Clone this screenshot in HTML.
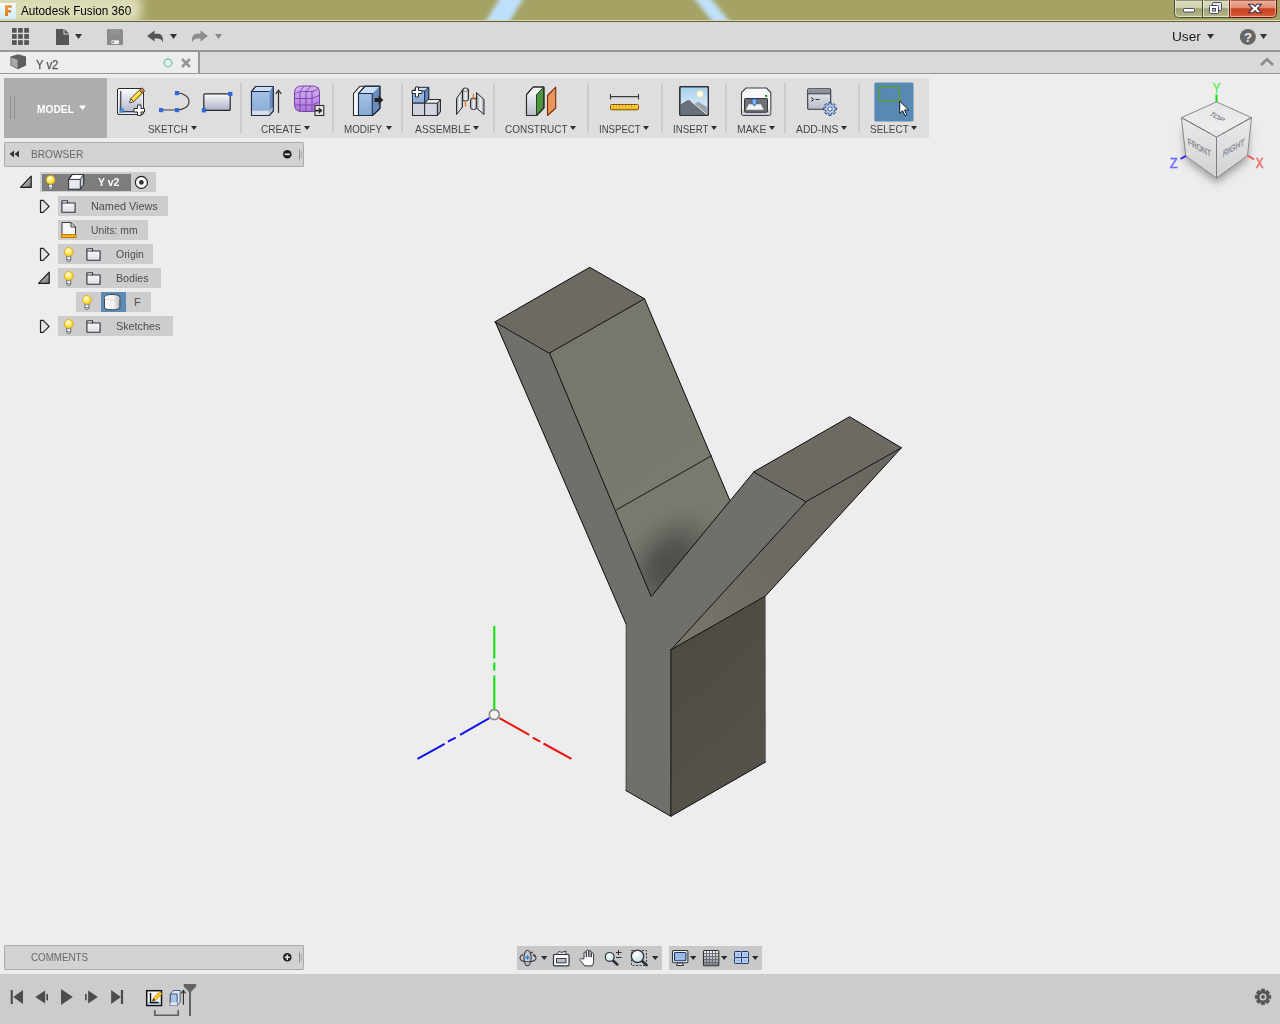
<!DOCTYPE html>
<html lang="en">
<head>
<meta charset="utf-8">
<title>Autodesk Fusion 360</title>
<style>
*{box-sizing:border-box;margin:0;padding:0}
html,body{width:1280px;height:1024px;overflow:hidden;background:#ededed;font-family:"Liberation Sans",sans-serif;font-size:11px;color:#555}
#app{position:absolute;left:0;top:0;width:1280px;height:1024px;overflow:hidden;background:#ededed}
#app div,#app span,#app svg{position:absolute}
#app svg{overflow:visible}
#titlebar{left:0;top:0;width:1280px;height:22px;background:#a5a364;overflow:hidden}
#titlebar .l1{left:0;top:20px;width:1280px;height:1px;background:#dddcb4}
#titlebar .l2{left:0;top:21px;width:1280px;height:1px;background:#5c5b3c}
#glow{left:-14px;top:-6px;width:156px;height:30px;border-radius:12px;background:rgba(255,255,236,.62);filter:blur(5px)}
#title{left:21px;top:4px;font-size:12px;color:#000;white-space:nowrap;line-height:14px;transform-origin:0 0;transform:scaleX(.977)}
#qat{left:0;top:22px;width:1280px;height:28px;background:#d9d9d9}
#sep1{left:0;top:50px;width:1280px;height:2px;background:#979797}
#tabs{left:0;top:52px;width:1280px;height:21px;background:#d9d9d9}
#tab{left:0;top:0;width:198px;height:21px;background:#ededed}
#tabsep{left:198px;top:0;width:2px;height:21px;background:#979797}
#sep2{left:0;top:73px;width:1280px;height:1px;background:#979797}
#tabname{left:36px;top:6px;font-size:12px;color:#555;-webkit-text-stroke:.25px #555;line-height:14px;white-space:nowrap;transform-origin:0 0;transform:scaleX(.94)}
#user{left:1172px;top:29px;font-size:13px;color:#1a1a1a;line-height:16px;transform-origin:0 0;transform:scaleX(1.05)}
#ribbon{left:4px;top:78px;width:925px;height:60px;background:#dedede}
#model{left:0;top:0;width:103px;height:60px;background:#adadad}
#model .t{left:32.5px;top:24px;font-size:11px;font-weight:bold;color:#fff;line-height:14px;transform-origin:0 0;transform:scaleX(.93)}
.rs{top:5px;width:2px;height:50px;background:#cbcbcb}
.rl{top:44px;font-size:11px;color:#454545;line-height:14px;white-space:nowrap;transform-origin:0 0;transform:scaleX(.88)}
.tri{width:0;height:0;border-left:3.5px solid transparent;border-right:3.5px solid transparent;border-top:4px solid #333}
#timeline{left:0;top:974px;width:1280px;height:50px;background:#cccccc}
.panel{left:4px;width:300px;height:25px;background:#d2d2d2;border:1px solid #aaa;border-radius:1px}
.panel .t{left:26px;top:4px;font-size:11px;color:#666;line-height:14px;transform-origin:0 0;transform:scaleX(.92)}
.navbox{top:946px;height:24px;background:#c8c8c8}
.row{height:20px;background:#cdcdcd}
.row .t{font-size:11px;color:#4d4d4d;line-height:14px;top:3px;white-space:nowrap}
</style>
</head>
<body>
<div id="app">
<div id="titlebar">
  <svg style="left:0;top:0" width="1280" height="22" viewBox="0 0 1280 22">
    <defs><filter id="bl" x="-20%" y="-50%" width="140%" height="200%"><feGaussianBlur stdDeviation="2.3"/></filter></defs>
    <g filter="url(#bl)" fill="#bfe0fa">
      <polygon points="501,-4 525,-4 507,26 483,26"/>
      <polygon points="692,-4 709,-4 733,26 716,26"/>
    </g>
  </svg>
  <div id="glow"></div>
  <div class="l1"></div><div class="l2"></div>
  <svg style="left:0;top:2px" width="17" height="17" viewBox="0 0 17 17">
    <defs><linearGradient id="ai" x1="0" y1="0" x2="0" y2="1"><stop offset="0" stop-color="#f4fbff"/><stop offset="1" stop-color="#cfeaf8"/></linearGradient>
    <linearGradient id="af" x1="0" y1="0" x2="1" y2="1"><stop offset="0" stop-color="#f6a33a"/><stop offset="1" stop-color="#d9601a"/></linearGradient></defs>
    <rect x="0" y="1" width="16" height="16" fill="url(#ai)"/>
    <path d="M5 3.2h6.6v2.6H8v2.2h3v2.4H8V14H5z" fill="url(#af)"/>
  </svg>
  <div id="title">Autodesk Fusion 360</div>
  <svg style="left:1174px;top:0" width="104" height="19" viewBox="0 0 104 19">
    <defs>
      <linearGradient id="wb" x1="0" y1="0" x2="0" y2="1"><stop offset="0" stop-color="#dedec4"/><stop offset=".45" stop-color="#d0d0ac"/><stop offset=".5" stop-color="#9e9e72"/><stop offset="1" stop-color="#bcbc90"/></linearGradient>
      <linearGradient id="wc" x1="0" y1="0" x2="0" y2="1"><stop offset="0" stop-color="#f0b4a0"/><stop offset=".45" stop-color="#e08c74"/><stop offset=".5" stop-color="#c9411f"/><stop offset=".8" stop-color="#d0502c"/><stop offset="1" stop-color="#dc7050"/></linearGradient>
    </defs>
    <path d="M.5 0V13.5Q.5 17.5 4.5 17.5H55.5V0z" fill="url(#wb)" stroke="#4d4d33" stroke-width="1"/>
    <path d="M55.5 0V17.5H98.5Q102.5 17.5 102.5 13.5V0z" fill="url(#wc)" stroke="#5a1a10" stroke-width="1"/>
    <path d="M1.5 0V13.5Q1.5 16.5 4.5 16.5H54.5V0" fill="none" stroke="#f0f0dc" stroke-opacity=".7" stroke-width="1"/>
    <path d="M56.5 0V16.5H98.5Q101.5 16.5 101.5 13.5V0" fill="none" stroke="#ffd8cc" stroke-opacity=".6" stroke-width="1"/>
    <line x1="28.5" y1="0" x2="28.5" y2="17" stroke="#4d4d33"/>
    <line x1="29.5" y1="0" x2="29.5" y2="17" stroke="#f0f0dc" stroke-opacity=".7"/>
    <rect x="9.5" y="8.5" width="11" height="3.5" rx="1" fill="#fff" stroke="#4a4a6a" stroke-width="1"/>
    <rect x="38.5" y="2.5" width="9" height="8" rx="1" fill="#e8e8e8" stroke="#4a4a6a"/>
    <rect x="35.5" y="5.500" width="9" height="8" rx="1" fill="#fff" stroke="#4a4a6a"/>
    <rect x="38.500" y="8.5" width="3" height="2.5" fill="#c8c8b0" stroke="#4a4a6a"/>
    <path d="M74.400 4.200L78.500 8.500 74.400 12.800h4.400L81 10.600 83.200 12.800h4.400L83.500 8.500 87.600 4.200H83.200L81 6.400 78.800 4.200z" fill="#fff" stroke="#45304a" stroke-width="1.100" stroke-linejoin="round"/>
  </svg>
</div>
<div id="qat">
  <svg style="left:0;top:0" width="1280" height="28" viewBox="0 22 1280 28">
    <g fill="#555">
      <rect x="12" y="28" width="4.700" height="4.700"/><rect x="18.100" y="28" width="4.700" height="4.700"/><rect x="24.200" y="28" width="4.700" height="4.700"/>
      <rect x="12" y="34.100" width="4.700" height="4.700"/><rect x="18.100" y="34.100" width="4.700" height="4.700"/><rect x="24.200" y="34.100" width="4.700" height="4.700"/>
      <rect x="12" y="40.200" width="4.700" height="4.700"/><rect x="18.100" y="40.200" width="4.700" height="4.700"/><rect x="24.200" y="40.200" width="4.700" height="4.700"/>
    </g>
    <path d="M56 29h7.500v5.500H69V45H56z" fill="#555"/>
    <path d="M64.500 29l4.500 4.500h-4.500z" fill="#555"/>
    <path d="M75 34h7l-3.500 5z" fill="#333"/>
    <path d="M107 29h14.500l1.500 1.500V45H107z" fill="#8b8b8b"/>
    <rect x="110" y="29" width="9.500" height="5" fill="#949494"/>
    <rect x="111.500" y="40.300" width="7.500" height="3.700" rx=".5" fill="#ececec"/>
    <rect x="112.300" y="41.200" width="1.600" height="2" fill="#8b8b8b"/>
    <path d="M147 36l7.500-5.500v3.300h3c4 0 5.500 2.500 5.500 7.200v1.500c-1.300-3-2.800-4-5.500-4h-3v3z" fill="#555"/>
    <path d="M170 34h7l-3.500 5z" fill="#333"/>
    <path d="M208 36l-7.500-5.500v3.300h-3c-4 0-5.500 2.500-5.500 7.200v1.500c1.300-3 2.800-4 5.500-4h3v3z" fill="#8b8b8b"/>
    <path d="M215 34h7l-3.500 5z" fill="#8b8b8b"/>
    <path d="M1207 34h7l-3.500 5z" fill="#333"/>
    <circle cx="1247.900" cy="36.900" r="8" fill="#666"/>
    <path d="M1260 34h7l-3.500 5z" fill="#333"/>
    <text x="1248" y="41.600" font-family="'Liberation Sans',sans-serif" font-size="13" font-weight="bold" fill="#ececec" text-anchor="middle">?</text>
  </svg>
  
</div>
<div id="user">User</div>
<div id="sep1"></div>
<div id="tabs"><div id="tab"><div id="tabname">Y v2</div></div><div id="tabsep"></div>
  <svg style="left:0;top:0" width="1280" height="21" viewBox="0 52 1280 21">
    <path d="M10.500 56.500L18 54.300 26 56.500V65.500L18 69.300 10.500 65.500z" fill="#5e5e5e"/>
    <path d="M11.300 57.600L17.600 59.700V68.300L11.300 65.200z" fill="#a9a9a9"/>
    <circle cx="167.900" cy="62.900" r="3.900" fill="none" stroke="#6fcab5" stroke-width="1.300"/>
    <path d="M182 59l8 8M190 59l-8 8" stroke="#969696" stroke-width="2.600" fill="none"/>
    <path d="M1261 65l6-5.800 6 5.800" stroke="#8a8a8a" stroke-width="2.600" fill="none"/>
  </svg>
</div>
<div id="sep2"></div>
<svg id="vp" style="left:0;top:74px" width="1280" height="900" viewBox="0 74 1280 900">
<defs>
<radialGradient id="sh2" cx="0.5" cy="0.5" r="0.5"><stop offset="0" stop-color="#474843" stop-opacity=".9"/><stop offset="0.3" stop-color="#4c4d48" stop-opacity=".8"/><stop offset="0.55" stop-color="#585853" stop-opacity=".52"/><stop offset="0.8" stop-color="#66665f" stop-opacity=".2"/><stop offset="1" stop-color="#75746d" stop-opacity="0"/></radialGradient>
<linearGradient id="gl" gradientUnits="userSpaceOnUse" x1="560" y1="330" x2="700" y2="520"><stop offset="0" stop-color="#77776e"/><stop offset="1" stop-color="#7a7a71"/></linearGradient>
<linearGradient id="gu" gradientUnits="userSpaceOnUse" x1="880" y1="460" x2="690" y2="640"><stop offset="0" stop-color="#6c6861"/><stop offset="0.6" stop-color="#6e6a63"/><stop offset="1" stop-color="#79746b"/></linearGradient>
<linearGradient id="gd" gradientUnits="userSpaceOnUse" x1="670" y1="650" x2="766" y2="760"><stop offset="0" stop-color="#4e4b45"/><stop offset="1" stop-color="#55524b"/></linearGradient>
<clipPath id="cl"><polygon points="549.5,353 644.5,298.8 730.8,502.6 651.2,596.6"/></clipPath>
</defs>
<g stroke="none">
<polygon points="549.5,353 644.5,298.8 730.8,502.6 651.2,596.6" fill="url(#gl)"/>
<g clip-path="url(#cl)"><ellipse cx="669" cy="564" rx="74" ry="50" transform="rotate(-52 669 564)" fill="url(#sh2)"/></g>
<polygon points="495.2,321.7 549.5,353 651.2,596.6 754,471.7 806.3,501.5 670.9,649.8 670.8,816.3 626,790.6 626.1,624.1" fill="#6f706a"/>
<polygon points="495.2,321.7 589.7,267.3 644.5,298.8 549.5,353" fill="#6e6a63"/>
<polygon points="754,471.7 849.6,416.7 901.4,447.8 806.3,501.5" fill="#6e6a63"/>
<polygon points="806.3,501.5 901.4,447.8 765.4,596 670.9,649.8" fill="url(#gu)"/>
<polygon points="670.9,649.8 765.4,596 765.6,762 670.8,816.3" fill="url(#gd)"/>
</g>
<g stroke="#0c0c0c" stroke-width="1" stroke-linejoin="round" stroke-linecap="round" fill="none">
<polygon points="495.2,321.7 589.7,267.3 644.5,298.8 549.5,353"/>
<polygon points="754,471.7 849.6,416.7 901.4,447.8 806.3,501.5"/>
<path d="M495.2 321.7L626.1 624.1M549.5 353L651.2 596.6L754 471.7M644.5 298.8L729.600 499.800M806.3 501.5L670.9 649.8L765.4 596L901.4 447.8M670.9 649.8L670.8 816.3M626 790.6L670.8 816.3L765.6 762"/>
<path d="M616.7 509.7L711.5 455.8" stroke-width=".9"/>
<path d="M626.1 624.1L626 790.6" stroke-opacity=".55"/>
<path d="M765.4 596L765.6 762" stroke-opacity=".2"/>
</g>
<g fill="none" stroke-width="2">
<path d="M494.3 626V658.400M494.3 662.500V670.600M494.3 675.500V709" stroke="#0ee00e"/>
<path d="M499.500 718.200L529.200 734.800M532.800 737.700L540.200 741.700M543.500 743.500L571.400 758.900" stroke="#ee1111"/>
<path d="M489.400 718.200L460.100 734.800M455.700 737.700L447.900 741.700M444.700 743.800L417.500 758.900" stroke="#1111ee"/>
</g>
<circle cx="494.3" cy="714.6" r="5" fill="#f4f4f4" stroke="#8a8a8a" stroke-width="1.600"/>
<defs>
<filter id="vcb" x="-50%" y="-50%" width="200%" height="200%"><feGaussianBlur stdDeviation="4"/></filter>
<linearGradient id="vcl" x1="0" y1="0" x2="0" y2="1"><stop offset="0" stop-color="#eaeaea"/><stop offset="1" stop-color="#d2d2d2"/></linearGradient>
<linearGradient id="vct" x1="0" y1="0" x2="0" y2="1"><stop offset="0" stop-color="#e6e6e6"/><stop offset="1" stop-color="#eeeeee"/></linearGradient>
</defs>
<polygon points="1184,126 1216.5,142 1249,126 1247.500,160 1216.500,183 1185.800,160" fill="#5a5a5a" fill-opacity=".55" filter="url(#vcb)"/>
<g stroke="#8a8a8a" stroke-width="1" stroke-linejoin="round">
<polygon points="1216.500,101.900 1251.500,117.600 1216.500,137.100 1181.400,117.600" fill="url(#vct)"/>
<polygon points="1181.400,117.600 1216.500,137.100 1216.500,178.100 1185.800,156.100" fill="url(#vcl)"/>
<polygon points="1216.500,137.100 1251.500,117.600 1247.500,155.500 1216.500,178.100" fill="url(#vcl)"/>
</g>
<polygon points="1216.500,129.500 1223,133.300 1223,140.800 1216.500,144.500 1210,140.800 1210,133.300" fill="#dfe3e8" fill-opacity=".7"/>
<path d="M1216.500 137.100V178" stroke="#7e7e7e" stroke-width="1"/>
<path d="M1216.500 137.100L1181.400 117.600M1216.500 137.100L1251.500 117.600" stroke="#7e7e7e" stroke-width="1" fill="none"/>
<g font-family="'Liberation Sans',sans-serif" font-size="9.5" fill="#82868e" stroke="#82868e" stroke-width=".3" text-anchor="middle">
<text transform="matrix(0.717 0.399 0.114 0.994 1199.69 150.90)">FRONT</text>
<text transform="matrix(0.740 -0.412 -0.105 0.995 1233.44 150.90)">RIGHT</text>
<text transform="matrix(0.700 0.390 -0.660 0.400 1214.94 118.17)">TOP</text>
</g>
<path d="M1216.500 94.500v7.500" stroke="#10dd10" stroke-width="2"/>
<path d="M1180.500 158.800l5.500-2.900" stroke="#2a2af0" stroke-width="2"/>
<path d="M1247.500 155.500l6.500 3.800" stroke="#ee5a5a" stroke-width="2"/>
<g font-family="'Liberation Sans',sans-serif" font-size="14.500" text-anchor="middle" stroke-width=".5">
<text transform="translate(1216.700 92.800) scale(.8 1)" fill="#62ee62" stroke="#62ee62">Y</text>
<text transform="translate(1173.600 167.800) scale(.88 1)" fill="#6c6cff" stroke="#6c6cff">Z</text>
<text transform="translate(1259.600 167.800) scale(.8 1)" fill="#f06c6c" stroke="#f06c6c">X</text>
</g>
</svg>
<div id="ribbon">
  <div id="model"><div class="t">MODEL</div></div>
  <div class="rs" style="left:236px"></div>
  <div class="rs" style="left:328px"></div>
  <div class="rs" style="left:397px"></div>
  <div class="rs" style="left:489px"></div>
  <div class="rs" style="left:583px"></div>
  <div class="rs" style="left:657px"></div>
  <div class="rs" style="left:721px"></div>
  <div class="rs" style="left:780px"></div>
  <div class="rs" style="left:854px"></div>
  <div class="rl" style="left:144.1px;transform:scaleX(0.890)">SKETCH</div>
  <div class="rl" style="left:256.8px;transform:scaleX(0.920)">CREATE</div>
  <div class="rl" style="left:339.9px;transform:scaleX(0.890)">MODIFY</div>
  <div class="rl" style="left:410.5px;transform:scaleX(0.938)">ASSEMBLE</div>
  <div class="rl" style="left:500.8px;transform:scaleX(0.907)">CONSTRUCT</div>
  <div class="rl" style="left:594.8px;transform:scaleX(0.874)">INSPECT</div>
  <div class="rl" style="left:669.0px;transform:scaleX(0.884)">INSERT</div>
  <div class="rl" style="left:732.5px;transform:scaleX(0.944)">MAKE</div>
  <div class="rl" style="left:791.8px;transform:scaleX(0.938)">ADD-INS</div>
  <div class="rl" style="left:865.8px;transform:scaleX(0.906)">SELECT</div>
  <svg style="left:0;top:0" width="925" height="60" viewBox="4 78 925 60">
    <defs>
      <linearGradient id="gw" x1="0" y1="0" x2="0" y2="1"><stop offset="0" stop-color="#fbfbfd"/><stop offset="1" stop-color="#a9b0c6"/></linearGradient>
      <linearGradient id="gb" x1="0" y1="0" x2="0" y2="1"><stop offset="0" stop-color="#a4c2e4"/><stop offset="1" stop-color="#86a9d6"/></linearGradient>
      <linearGradient id="gg" x1="0" y1="0" x2="0" y2="1"><stop offset="0" stop-color="#eceef2"/><stop offset="1" stop-color="#b7bcc8"/></linearGradient>
      <linearGradient id="gsky" x1="0" y1="0" x2="0" y2="1"><stop offset="0" stop-color="#a6cfec"/><stop offset="1" stop-color="#e9f5fc"/></linearGradient>
      <linearGradient id="gp" x1="0" y1="0" x2="0" y2="1"><stop offset="0" stop-color="#d4b4f0"/><stop offset="1" stop-color="#ac78dc"/></linearGradient>
      <linearGradient id="gy" x1="0" y1="0" x2="0" y2="1"><stop offset="0" stop-color="#ffe066"/><stop offset="1" stop-color="#eab000"/></linearGradient>
      <linearGradient id="gm" x1="0" y1="0" x2="1" y2="0"><stop offset="0" stop-color="#8e939c"/><stop offset=".5" stop-color="#f2f3f5"/><stop offset="1" stop-color="#9a9fa8"/></linearGradient>
    </defs>
    <path d="M10.500 96v23M14.500 96v23" stroke="#8e8e8e" stroke-width="1"/>
    <path d="M79 105.500h7l-3.500 4.500z" fill="#fff"/>
    <g fill="#2e2e2e">
      <path d="M191 126h6l-3 4z"/><path d="M304 126h6l-3 4z"/><path d="M386 126h6l-3 4z"/><path d="M473 126h6l-3 4z"/>
      <path d="M570 126h6l-3 4z"/><path d="M643 126h6l-3 4z"/><path d="M711 126h6l-3 4z"/><path d="M769 126h6l-3 4z"/>
      <path d="M841 126h6l-3 4z"/><path d="M911 126h6l-3 4z"/>
    </g>
    <rect x="117.500" y="88.500" width="26" height="26" rx="1.500" fill="url(#gw)" stroke="#2a2a2a"/>
    <rect x="118.500" y="89.500" width="24" height="24" rx="1" fill="none" stroke="#fff" stroke-opacity=".8"/>
    <path d="M120.700 91v20.500H134" fill="none" stroke="#3a3f4a" stroke-width="1.200"/>
    <rect x="120" y="108.800" width="3.300" height="3.300" fill="#4a90e0" stroke="#2a60b0" stroke-width=".5"/>
    <g transform="rotate(-45 136.500 96)">
      <rect x="130.500" y="93.900" width="12" height="4.200" fill="#ffd21a" stroke="#4a3208" stroke-width=".8"/>
      <rect x="142.500" y="93.900" width="3.500" height="4.200" fill="#c98a5a" stroke="#4a3208" stroke-width=".8"/>
      <path d="M130.500 93.900l-3.800 2.100 3.800 2.100z" fill="#fff" stroke="#4a3208" stroke-width=".8" stroke-linejoin="round"/>
      <path d="M131 95.300h11" stroke="#fff2a0" stroke-width="1"/>
    </g>
    <path d="M137.500 105h3.500v3.500h3.500v3.500h-3.500v3.500h-3.500v-3.500H134v-3.500h3.500z" fill="#fff" stroke="#2a2a2a" stroke-width="1" stroke-linejoin="round"/>
    <path d="M161 110h16c6 0 12-3 12-8.500s-6-8.500-12-8.500" fill="none" stroke="#3a3a3a" stroke-width="1.150"/>
    <rect x="159" y="108" width="4.200" height="4.200" fill="#2f68d8"/><rect x="174.900" y="108" width="4.200" height="4.200" fill="#2f68d8"/><rect x="174.900" y="91" width="4.200" height="4.200" fill="#2f68d8"/>
    <rect x="203.800" y="93.800" width="26.400" height="16.600" rx="1" fill="url(#gw)" stroke="#2a2a2a" stroke-width="1.200"/>
    <rect x="228.200" y="91.800" width="4.200" height="4.200" fill="#2f68d8"/><rect x="201.800" y="108.200" width="4.200" height="4.200" fill="#2f68d8"/>
    <path d="M251.500 91.500l4-5h17.800v24.300l-4 4.700h-17.800z" fill="#c9dcf0" stroke="#1e2c4c" stroke-width="1.100" stroke-linejoin="round"/>
    <path d="M269.300 91.500l4-5v24.300l-4 4.700z" fill="#6b8cbc"/>
    <rect x="251.500" y="91.500" width="17.800" height="24" fill="url(#gb)"/>
    <path d="M251.500 110.800h17.800v4.700h-17.800z" fill="#d9dde4"/><path d="M269.300 110.800l4-4.600v4.600l-4 4.700z" fill="#b9c0cc"/>
    <path d="M251.500 91.500l4-5h17.800v24.300l-4 4.700h-17.800zM251.500 91.500h17.800" fill="none" stroke="#1e2c4c" stroke-width="1.100" stroke-linejoin="round"/>
    <path d="M278.500 113V91.500" stroke="#2a2a2a" stroke-width="1.200" fill="none"/><path d="M275.800 93.800l2.700-3.600 2.700 3.600" stroke="#2a2a2a" stroke-width="1.200" fill="none"/>
    <path d="M294.500 93q0-7 7-7h11q7 0 7 7v11.500q0 7-7 7h-11q-7 0-7-7z" fill="url(#gp)" stroke="#7c3cac" stroke-width="1"/>
    <path d="M294.500 94.500q2-3 8-3h9.500M312 91.500v20M300 92v19.500M306 91.500v20M294.500 98.500h17.500M294.500 105h17.500M312 98.500l7-3M312 105l7-3M312 91.500q5-1 7-4M300 91.700l4-5.500M306 91.500l5-5.500" fill="none" stroke="#7c3cac" stroke-width=".9"/>
    <rect x="315" y="105.500" width="8.800" height="10" fill="#e6e6e6" stroke="#2e2e2e" stroke-width="1.100"/>
    <path d="M315 109.800h3.800v-2.600l3.800 3.400-3.800 3.400v-2.600H315z" fill="#2e2e2e"/>
    <path d="M353.500 93.500l6.500-7.300h19.800v22.300l-7.500 7h-18.800z" fill="#f4f5f7" stroke="#2a2a2a" stroke-width="1.100" stroke-linejoin="round"/>
    <path d="M358.500 93.500l6.500-7.300h14.800v22.300l-7.500 7h-13.800z" fill="#c9dcf0" stroke="#1e2c4c" stroke-width="1.100" stroke-linejoin="round"/>
    <rect x="358.500" y="93.500" width="13.800" height="22" fill="url(#gb)"/>
    <path d="M372.300 93.500l7.500-7.300v22.300l-7.500 7z" fill="#6b8cbc"/>
    <path d="M358.500 93.500l6.500-7.300h14.800v22.300l-7.500 7h-13.800zM358.500 93.500h13.800v22" fill="none" stroke="#1e2c4c" stroke-width="1.100" stroke-linejoin="round"/>
    <path d="M374.500 98h4v-2.700l4.800 4.700-4.800 4.700V102h-4z" fill="#222"/>
    <path d="M412.500 91l4-3.700h12.200v12l-4 3.900h-12.200z" fill="#c9dcf0" stroke="#1e2c4c" stroke-width="1" stroke-linejoin="round"/>
    <rect x="412.500" y="91" width="12.200" height="12.200" fill="url(#gb)" stroke="#1e2c4c" stroke-width="1"/>
    <path d="M424.700 91l4-3.700v12l-4 3.900z" fill="#6b8cbc" stroke="#1e2c4c" stroke-width="1" stroke-linejoin="round"/>
    <path d="M424.700 103.200l3.500-3.700h12.300v12l-3.200 4h-12.600z" fill="#eef0f3" stroke="#2a2a2a" stroke-width="1" stroke-linejoin="round"/>
    <path d="M437.300 103.200l3.200-3.700v12l-3.200 4z" fill="#a9aeb8" stroke="#2a2a2a" stroke-width="1" stroke-linejoin="round"/>
    <rect x="412.500" y="103.200" width="12.200" height="12.300" fill="#cfd3dc" stroke="#2a2a2a" stroke-width="1"/>
    <rect x="424.700" y="103.200" width="12.600" height="12.300" fill="#d3d7e0" stroke="#2a2a2a" stroke-width="1"/>
    <path d="M415.500 87h3v3.500h3.500v3h-3.500V97h-3v-3.500H412v-3h3.500z" fill="#fff" stroke="#2a2a2a" stroke-width="1" stroke-linejoin="round"/>
    <path d="M456.500 98.500l6-8.500v17l-6 7.500z" fill="url(#gm)" stroke="#2a2a2a" stroke-width="1" stroke-linejoin="round"/>
    <path d="M462.500 90q0-2 3-2t3 2v9.500q0 1.500-3 1.500t-3-1.500z" fill="url(#gm)" stroke="#2a2a2a" stroke-width="1"/>
    <ellipse cx="465.500" cy="90" rx="2.200" ry="1.400" fill="#fff" stroke="#444" stroke-width=".7"/>
    <path d="M476.500 92.500l7.500 7v15l-7.500-6.500z" fill="url(#gm)" stroke="#2a2a2a" stroke-width="1" stroke-linejoin="round"/>
    <path d="M470.500 100q0-2 3-2t3 2v7.500q0 2-3 2t-3-2z" fill="url(#gm)" stroke="#2a2a2a" stroke-width="1"/>
    <path d="M465.500 101.500v5M473.300 94v6" stroke="#ff6a00" stroke-width="1.200"/>
    <path d="M526.500 94.600l6.700-7.600h10.600v21l-7.300 7.500h-10z" fill="#f6f7f9" stroke="#2a2a2a" stroke-width="1.100" stroke-linejoin="round"/>
    <rect x="526.500" y="94.600" width="10" height="20.900" fill="url(#gg)"/>
    <path d="M536.500 94.600l7.300-7.600v21l-7.300 7.500z" fill="#4f9440" stroke="#1e4a18" stroke-width="1" stroke-linejoin="round"/>
    <path d="M526.500 94.600l6.700-7.600h10.600v21l-7.300 7.500h-10z" fill="none" stroke="#2a2a2a" stroke-width="1.100" stroke-linejoin="round"/>
    <path d="M547.500 95.500l8.200-8.300v20.800l-8.200 7.500z" fill="#ea9560" stroke="#7a2a00" stroke-width="1.100" stroke-linejoin="round"/>
    <path d="M610.500 96.600h28M610.500 94v5.500M638.500 94v5.500" stroke="#3a3a3a" stroke-width="1.100" fill="none"/>
    <rect x="610.500" y="104.500" width="28" height="5.300" rx="1" fill="url(#gy)" stroke="#8a5200" stroke-width="1"/>
    <path d="M613.500 105v2M616.500 105v1.500M619.500 105v2M622.500 105v1.500M625.500 105v2M628.500 105v1.500M631.500 105v2M634.500 105v1.500" stroke="#b07800" stroke-width=".7"/>
    <rect x="679.800" y="86.700" width="28.600" height="28.600" rx="1" fill="url(#gsky)" stroke="#2e2e2e" stroke-width="1.200"/>
    <circle cx="700" cy="94" r="3.100" fill="#fffdf0" stroke="#ffe9a0" stroke-width="1"/>
    <path d="M693 104.500l5.500-2.800 9.300 5.800v7.200H700z" fill="#9aa2b0"/>
    <path d="M680.400 104.500l7-4.300q1.500-.6 3 .5l16.600 14h-26.600z" fill="#6a6f7e"/>
    <path d="M690.500 100.700l16.500 14" stroke="#f6efd8" stroke-width=".9" fill="none"/>
    <rect x="679.800" y="86.700" width="28.600" height="28.600" rx="1" fill="none" stroke="#2e2e2e" stroke-width="1.200"/>
    <path d="M741.500 92.500l4.500-4.500h20.500l4.300 4.500V113q0 2.500-2.500 2.500h-24.300q-2.500 0-2.500-2.500z" fill="#f7f7f7" stroke="#3a3f4a" stroke-width="1.100"/>
    <path d="M742 110h28.500v3q0 2-2 2h-24.500q-2 0-2-2z" fill="#c9ccd2"/>
    <rect x="744.500" y="98.500" width="23" height="13.800" rx="1.500" fill="#6e7178" stroke="#33363c" stroke-width="1.100"/>
    <path d="M748.800 104.200h12l2.800 5.600h-17.600z" fill="#f2f2f2"/>
    <path d="M752 99h4.800v4l-2.400 3-2.400-3z" fill="#7fb2e8" stroke="#1e4a9a" stroke-width=".8"/>
    <rect x="765" y="95" width="2.200" height="1.800" fill="#0a8a0a"/>
    <rect x="807.700" y="88.700" width="23" height="20.600" rx="1" fill="url(#gg)" stroke="#33363c" stroke-width="1.100"/>
    <rect x="808.300" y="89.300" width="21.800" height="4.200" fill="#8d919e"/>
    <path d="M807.700 93.800h23" stroke="#33363c" stroke-width="1"/>
    <path d="M811 97.500l3 2-3 2M815.500 99.500h4" stroke="#33363c" stroke-width="1" fill="none"/>
    <path d="M828.84 104.24L828.97 102.38L831.03 102.38L831.16 104.24L832.48 104.79L833.88 103.56L835.34 105.02L834.11 106.42L834.66 107.74L836.52 107.87L836.52 109.93L834.66 110.06L834.11 111.38L835.34 112.78L833.88 114.24L832.48 113.01L831.16 113.56L831.03 115.42L828.97 115.42L828.84 113.56L827.52 113.01L826.12 114.24L824.66 112.78L825.89 111.38L825.34 110.06L823.48 109.93L823.48 107.87L825.34 107.74L825.89 106.42L824.66 105.02L826.12 103.56L827.52 104.79z" fill="#b4cdec" stroke="#1e3a7a" stroke-width=".9" stroke-linejoin="round"/>
    <circle cx="830" cy="108.900" r="2.100" fill="#fff" stroke="#1e3a7a" stroke-width=".8"/>
    <rect x="874.400" y="82.400" width="39.100" height="39.100" rx="1.500" fill="#5789b3"/>
    <rect x="879.600" y="87" width="20" height="13.600" fill="none" stroke="#5ea60a" stroke-width="1"/>
    <path d="M899.700 101.200v12.300l2.900-2.700 2.300 4.900 1.900-.9-2.200-4.800h4.100z" fill="#fff" stroke="#101820" stroke-width="1" stroke-linejoin="round"/>
  </svg>
</div>
<div class="panel" style="top:142px"><div class="t">BROWSER</div>
  <svg style="left:-1px;top:-1px" width="300" height="25" viewBox="4 142 300 25">
    <path d="M14 150.500v7l-4.500-3.500zM19 150.500v7l-4.500-3.500z" fill="#333"/>
    <circle cx="287.300" cy="154.300" r="4.300" fill="#222"/><rect x="284.700" y="153.500" width="5.200" height="1.600" fill="#e6e6e6"/>
    <path d="M299.500 149.500v10" stroke="#888" stroke-width="1"/><path d="M301.500 151v7" stroke="#aaa" stroke-width="1"/>
  </svg>
</div>
<div id="tree" style="left:0;top:166px;width:310px;height:180px">
  <div class="row" style="left:40px;top:6px;width:116px"></div>
  <div style="left:42px;top:7.500px;width:89px;height:17px;background:#7d7d7d"></div>
  <div class="row" style="left:58px;top:30px;width:110px"><div class="t" style="left:33px;transform-origin:0 0;transform:scaleX(.985)">Named Views</div></div>
  <div class="row" style="left:58px;top:54px;width:90px"><div class="t" style="left:33px;transform-origin:0 0;transform:scaleX(.94)">Units: mm</div></div>
  <div class="row" style="left:58px;top:78px;width:95px"><div class="t" style="left:58px;transform-origin:0 0;transform:scaleX(.95)">Origin</div></div>
  <div class="row" style="left:58px;top:102px;width:103px"><div class="t" style="left:58px;transform-origin:0 0;transform:scaleX(.97)">Bodies</div></div>
  <div class="row" style="left:76px;top:126px;width:75px"><div style="left:25px;top:0;width:25px;height:20px;background:#5b8bb4"></div><div class="t" style="left:58px">F</div></div>
  <div class="row" style="left:58px;top:150px;width:115px"><div class="t" style="left:58px;transform-origin:0 0;transform:scaleX(.98)">Sketches</div></div>
  <div style="left:97.500px;top:9px;font-size:11px;font-weight:bold;color:#fff;line-height:14px;white-space:nowrap;transform-origin:0 0;transform:scaleX(.95)">Y v2</div>
  <svg style="left:0;top:0" width="310" height="180" viewBox="0 166 310 180">
    <defs>
      <radialGradient id="bulb" cx=".38" cy=".32" r=".75"><stop offset="0" stop-color="#fffde6"/><stop offset=".45" stop-color="#ffee6a"/><stop offset="1" stop-color="#efc416"/></radialGradient>
      <linearGradient id="fg" x1="0" y1="0" x2="0" y2="1"><stop offset="0" stop-color="#ffffff"/><stop offset="1" stop-color="#dcdee4"/></linearGradient>
      <linearGradient id="cyl" x1="0" y1="0" x2="1" y2="0"><stop offset="0" stop-color="#fdfdfd"/><stop offset=".6" stop-color="#f0f0f0"/><stop offset="1" stop-color="#b8b8b8"/></linearGradient>
      <linearGradient id="expg" x1="0" y1="0" x2="1" y2="1"><stop offset="0" stop-color="#e0e0e0"/><stop offset=".5" stop-color="#b0b0b0"/><stop offset="1" stop-color="#6a6a6a"/></linearGradient>
    </defs>
    <g transform="translate(26.300 181.700)"><path d="M4.900-5.600v11.200h-10.600z" fill="url(#expg)" stroke="#1a1a1a" stroke-width="1.200" stroke-linejoin="round"/></g>
    <g transform="translate(50.600 182)"><path d="M-2 2.200h4v3.600q0 1.700-2 1.700t-2-1.700z" fill="#eef0f6" stroke="#565c6c" stroke-width=".9"/><path d="M-1.900 5.600h3.800" stroke="#6a7080" stroke-width=".8"/><circle cx="0" cy="-2.100" r="4.400" fill="url(#bulb)" stroke="#d9a010" stroke-width=".8"/></g>
    <path d="M68.600 179.400l3.700-4.900h11.300v10l-3.300 4.700h-11.700z" fill="#fdfdfd" stroke="#2e323c" stroke-width="1.100" stroke-linejoin="round"/>
    <path d="M80.300 179.400l3.300-4.900v10l-3.300 4.700z" fill="#c8ccd6"/><rect x="68.600" y="179.400" width="11.700" height="9.800" fill="#e6e8ee"/>
    <path d="M68.600 179.400l3.700-4.900h11.300v10l-3.300 4.700h-11.700zM68.600 179.400h11.700v9.800M80.300 179.400l3.300-4.900" fill="none" stroke="#2e323c" stroke-width="1" stroke-linejoin="round"/>
    <circle cx="141.400" cy="182.400" r="6" fill="#fcfcfc" stroke="#222" stroke-width="1.200"/><circle cx="141.400" cy="182.400" r="2.300" fill="#2e2e2e"/>
    <g transform="translate(44.800 206.300)"><path d="M-4.300-6h2.700l5.900 6-5.900 6h-2.700z" fill="#e4e6ea" stroke="#222" stroke-width="1.200" stroke-linejoin="round"/></g>
    <g transform="translate(69 206.300)"><path d="M-7.100-5.600h5.600v2.300h7.600v9.200h-13.200z" fill="url(#fg)" stroke="#2e323c" stroke-width="1.100" stroke-linejoin="round"/><path d="M-7.100-3.300h5.600" stroke="#2e323c" stroke-width="1"/></g>
    <path d="M62 222.500h9l4.500 4.500v10.500H62z" fill="#f6f6f6" stroke="#3a3a3a" stroke-width="1" stroke-linejoin="round"/><path d="M71 222.500v4.500h4.500" fill="none" stroke="#3a3a3a" stroke-width="1"/>
    <rect x="61.500" y="234.600" width="14.500" height="3" fill="#ffbe1a" stroke="#c07000" stroke-width=".8"/><path d="M64 234.600v1.300M66.500 234.600v1.300M69 234.600v1.300M71.500 234.600v1.300M74 234.600v1.300" stroke="#a05a00" stroke-width=".6"/>
    <g transform="translate(44.800 254.300)"><path d="M-4.300-6h2.700l5.900 6-5.900 6h-2.700z" fill="#e4e6ea" stroke="#222" stroke-width="1.200" stroke-linejoin="round"/></g><g transform="translate(68.800 254)"><path d="M-2 2.200h4v3.600q0 1.700-2 1.700t-2-1.700z" fill="#eef0f6" stroke="#565c6c" stroke-width=".9"/><path d="M-1.900 5.600h3.800" stroke="#6a7080" stroke-width=".8"/><circle cx="0" cy="-2.100" r="4.400" fill="url(#bulb)" stroke="#d9a010" stroke-width=".8"/></g><g transform="translate(94 254.300)"><path d="M-7.100-5.600h5.600v2.300h7.600v9.200h-13.200z" fill="url(#fg)" stroke="#2e323c" stroke-width="1.100" stroke-linejoin="round"/><path d="M-7.100-3.300h5.600" stroke="#2e323c" stroke-width="1"/></g>
    <g transform="translate(44.300 277.700)"><path d="M4.900-5.600v11.200h-10.600z" fill="url(#expg)" stroke="#1a1a1a" stroke-width="1.200" stroke-linejoin="round"/></g><g transform="translate(68.800 278)"><path d="M-2 2.200h4v3.600q0 1.700-2 1.700t-2-1.700z" fill="#eef0f6" stroke="#565c6c" stroke-width=".9"/><path d="M-1.900 5.600h3.800" stroke="#6a7080" stroke-width=".8"/><circle cx="0" cy="-2.100" r="4.400" fill="url(#bulb)" stroke="#d9a010" stroke-width=".8"/></g><g transform="translate(94 278.300)"><path d="M-7.100-5.600h5.600v2.300h7.600v9.200h-13.200z" fill="url(#fg)" stroke="#2e323c" stroke-width="1.100" stroke-linejoin="round"/><path d="M-7.100-3.300h5.600" stroke="#2e323c" stroke-width="1"/></g>
    <g transform="translate(87 302)"><path d="M-2 2.200h4v3.600q0 1.700-2 1.700t-2-1.700z" fill="#eef0f6" stroke="#565c6c" stroke-width=".9"/><path d="M-1.900 5.600h3.800" stroke="#6a7080" stroke-width=".8"/><circle cx="0" cy="-2.100" r="4.400" fill="url(#bulb)" stroke="#d9a010" stroke-width=".8"/></g>
    <path d="M104.500 297.300q0-2.800 7.700-2.800t7.700 2.800v9.700q0 2.800-7.700 2.800t-7.700-2.800z" fill="url(#cyl)" stroke="#3a3a3a" stroke-width=".9"/>
    <path d="M104.500 297.500q0 2.500 7.700 2.500t7.700-2.500" fill="none" stroke="#d0d0d0" stroke-width=".7"/>
    <g transform="translate(44.800 326.300)"><path d="M-4.300-6h2.700l5.900 6-5.900 6h-2.700z" fill="#e4e6ea" stroke="#222" stroke-width="1.200" stroke-linejoin="round"/></g><g transform="translate(68.800 326)"><path d="M-2 2.200h4v3.600q0 1.700-2 1.700t-2-1.700z" fill="#eef0f6" stroke="#565c6c" stroke-width=".9"/><path d="M-1.900 5.600h3.800" stroke="#6a7080" stroke-width=".8"/><circle cx="0" cy="-2.100" r="4.400" fill="url(#bulb)" stroke="#d9a010" stroke-width=".8"/></g><g transform="translate(94 326.300)"><path d="M-7.100-5.600h5.600v2.300h7.600v9.200h-13.200z" fill="url(#fg)" stroke="#2e323c" stroke-width="1.100" stroke-linejoin="round"/><path d="M-7.100-3.300h5.600" stroke="#2e323c" stroke-width="1"/></g>
  </svg>
</div>
<div class="panel" style="top:945px"><div class="t" style="transform:scaleX(.89)">COMMENTS</div>
  <svg style="left:-1px;top:-1px" width="300" height="25" viewBox="4 945 300 25">
    <circle cx="287.300" cy="957.300" r="4.300" fill="#222"/><path d="M284.700 957.300h5.200M287.300 954.700v5.200" stroke="#e6e6e6" stroke-width="1.500"/>
    <path d="M299.500 952.500v10" stroke="#888" stroke-width="1"/><path d="M301.500 954v7" stroke="#aaa" stroke-width="1"/>
  </svg>
</div>
<div class="navbox" style="left:517px;width:145px"></div>
<div class="navbox" style="left:668.500px;width:93.500px"></div>
<svg style="left:0;top:940px" width="1280" height="84" viewBox="0 940 1280 84">
  <defs>
    <linearGradient id="ng" x1="0" y1="0" x2="0" y2="1"><stop offset="0" stop-color="#ffffff"/><stop offset="1" stop-color="#7c808a"/></linearGradient>
    <radialGradient id="lens" cx=".4" cy=".35" r=".7"><stop offset="0" stop-color="#ffffff"/><stop offset="1" stop-color="#c4dce0"/></radialGradient>
  </defs>
  <g fill="#2a2a2a">
    <path d="M541 956h6.400l-3.200 4z"/><path d="M652 956h6.400l-3.200 4z"/><path d="M690 956h6.400l-3.200 4z"/><path d="M721 956h6.400l-3.200 4z"/><path d="M752 956h6.400l-3.200 4z"/>
  </g>
  <ellipse cx="527.500" cy="958" rx="3.600" ry="7.800" fill="none" stroke="#3a3f48" stroke-width="1.100"/>
  <path d="M523 954.500q-3 1.200-3 3.500 0 3.700 8 3.700 8 0 8-3.700 0-2.300-3-3.500" fill="none" stroke="#3a3f48" stroke-width="1.100"/>
  <path d="M525.500 957.500h4M527.500 955.500v4" stroke="#1e7ae0" stroke-width="1.300"/>
  <path d="M530.500 952.500h2.600M531.800 951.200v2.600M533 955.700h2.600M534.300 954.400v2.600" stroke="#3a3f48" stroke-width=".8"/>
  <path d="M556 954.500l3.500-3.500 1.500 1.500 5-1.500v3.500" fill="#d8d8d8" stroke="#3a3f48" stroke-width="1"/>
  <rect x="553.500" y="954.500" width="15.500" height="11.300" rx=".8" fill="#fafafa" stroke="#2e323a" stroke-width="1.200"/>
  <rect x="556.500" y="958.500" width="9.500" height="4.300" fill="#b9bcc8" stroke="#3a3f48" stroke-width="1"/>
  <path d="M584 958.500v-5.300q0-1.300 1.200-1.300t1.200 1.300v3.800-5.700q0-1.300 1.200-1.300t1.200 1.300v5.500-4.900q0-1.300 1.200-1.300t1.200 1.300v5.300-3q0-1.300 1.200-1.300t1.200 1.300v7.300q0 2.700-1.500 4.400h-7.300l-4.600-5.500q-.7-1.300.4-1.800 1-.4 2.100.6z" fill="#fafafa" stroke="#2e323a" stroke-width="1" stroke-linejoin="round"/>
  <path d="M613 960.500l4.300 4" stroke="#2e323a" stroke-width="2.600" stroke-linecap="round"/>
  <circle cx="609.700" cy="956.900" r="4.400" fill="url(#lens)" stroke="#2e323a" stroke-width="1.200"/>
  <path d="M616 952.500h5.500M618.500 950v5M616 957.500h5.500" stroke="#2e323a" stroke-width="1" fill="none"/>
  <rect x="631.500" y="950.500" width="15" height="15" fill="none" stroke="#3a3a3a" stroke-width="1" stroke-dasharray="2 1.500"/>
  <path d="M642 961l4.500 4" stroke="#2e323a" stroke-width="2.800" stroke-linecap="round"/>
  <circle cx="637.500" cy="956.300" r="6.200" fill="url(#lens)" stroke="#2e323a" stroke-width="1.300"/>
  <path d="M677.500 963h5l1 2.500h-7z" fill="#fafafa" stroke="#2e323a" stroke-width="1" stroke-linejoin="round"/>
  <rect x="672.500" y="950.500" width="15.400" height="12.300" rx="1.200" fill="#f4f4f4" stroke="#2e323a" stroke-width="1.100"/>
  <rect x="674.500" y="952.500" width="11.400" height="8.200" rx="1" fill="#9cbbe2" stroke="#1e3670" stroke-width="1.100"/>
  <rect x="703.500" y="950.500" width="15.300" height="15.300" rx="1" fill="url(#ng)" stroke="#2e2e2e" stroke-width="1.100"/>
  <path d="M706.500 951v14.500M709.500 951v14.500M712.500 951v14.500M715.500 951v14.500M704 953.500h14.500M704 956.500h14.500M704 959.500h14.500M704 962.500h14.500" stroke="#6a6e78" stroke-width="1" fill="none"/>
  <g fill="#bcd3f0" stroke="#1e3670" stroke-width="1">
    <rect x="734.500" y="951.500" width="7" height="6" rx=".8"/><rect x="741.500" y="951.500" width="7" height="6" rx=".8"/>
    <rect x="734.500" y="957.500" width="7" height="6" rx=".8"/><rect x="741.500" y="957.500" width="7" height="6" rx=".8"/>
  </g>
  <g fill="#8fb0dc"><rect x="736.500" y="953.600" width="3" height="1.800"/><rect x="743.500" y="953.600" width="3" height="1.800"/><rect x="736.500" y="959.600" width="3" height="1.800"/><rect x="743.500" y="959.600" width="3" height="1.800"/></g>
</svg>
<div id="timeline">
<svg style="left:0;top:0" width="1280" height="50" viewBox="0 974 1280 50">
  <g fill="#4c4c4c">
    <rect x="10.700" y="990" width="2.100" height="14"/><path d="M23 990v14l-9.800-7z"/>
    <path d="M45.100 990.500v13l-9.800-6.500z"/><rect x="46.300" y="994" width="1.700" height="6.300"/>
    <path d="M61 989v16l11.800-8z"/>
    <rect x="85" y="994" width="1.700" height="6.300"/><path d="M88.100 990.500v13l9.800-6.500z"/>
    <path d="M111.100 990v14l9.800-7z"/><rect x="120.900" y="990" width="2.200" height="14"/>
  </g>
  <rect x="146.700" y="990.700" width="14.800" height="14.800" fill="#f4f6fa" stroke="#111" stroke-width="1.500"/>
  <path d="M148 1002h12.500v2.500H148z" fill="#a8c4e6"/>
  <path d="M150.500 993v9.500h8" fill="none" stroke="#111" stroke-width="1.400"/>
  <path d="M152.300 1001.300l1-3.200 6.500-6.500 2.200 2.200-6.500 6.500z" fill="#ffc81a" stroke="#b87a00" stroke-width=".6"/>
  <path d="M152.300 1001.300l1-3.200 2.200 2.200z" fill="#444"/>
  <path d="M170.300 994l3-3.500h6.800v11.500l-3 3.500h-6.800z" fill="#dce8f6" stroke="#3a4a6a" stroke-width=".9" stroke-linejoin="round"/>
  <rect x="170.300" y="994" width="6.800" height="11.500" fill="#a9c4e6" stroke="#3a4a6a" stroke-width=".9"/>
  <path d="M170.300 1002.500h6.800v3h-6.800z" fill="#e6e8ec"/>
  <path d="M183.400 1004.700v-13.500M181.200 993.500l2.200-3 2.200 3" fill="none" stroke="#2a2a2a" stroke-width="1.100"/>
  <path d="M154.800 1010v5.200h23.400v-5.200" fill="none" stroke="#5e5e5e" stroke-width="1.600"/>
  <path d="M183.800 984h12.400v2.500l-5.200 5.500v24h-2v-24l-5.200-5.500z" fill="#646464"/>
  <path d="M1261.15 991.19L1261.29 989.09L1264.71 989.09L1264.85 991.19L1265.72 991.55L1267.31 990.16L1269.74 992.59L1268.35 994.18L1268.71 995.05L1270.81 995.19L1270.81 998.61L1268.71 998.75L1268.35 999.62L1269.74 1001.21L1267.31 1003.64L1265.72 1002.25L1264.85 1002.61L1264.71 1004.71L1261.29 1004.71L1261.15 1002.61L1260.28 1002.25L1258.69 1003.64L1256.26 1001.21L1257.65 999.62L1257.29 998.75L1255.19 998.61L1255.19 995.19L1257.29 995.05L1257.65 994.18L1256.26 992.59L1258.69 990.16L1260.28 991.55z" fill="#555" stroke="#555" stroke-width=".6" stroke-linejoin="round"/>
  <circle cx="1263" cy="996.900" r="3.500" fill="#cccccc"/><circle cx="1263" cy="996.900" r="1.900" fill="#555"/>
</svg>
</div>
</div>
</body>
</html>
